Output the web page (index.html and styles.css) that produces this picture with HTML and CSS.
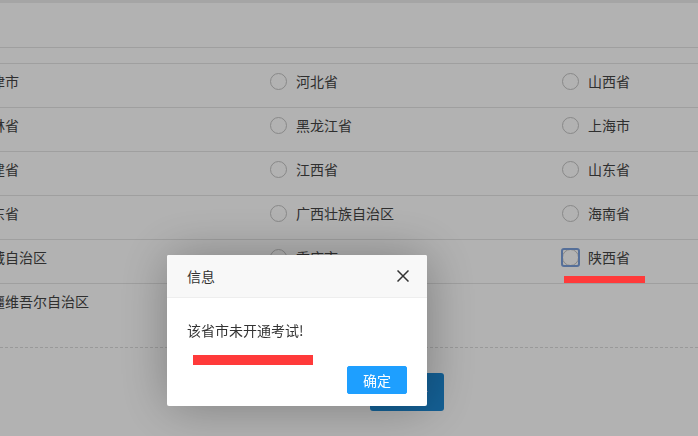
FILE: index.html
```html
<!DOCTYPE html>
<html lang="zh-CN">
<head>
    <meta charset="UTF-8">
    <meta name="viewport" content="width=device-width, initial-scale=1.0">
    <title>选择考试省市</title>
    <link rel="stylesheet" href="styles.css">
</head>
<body>
    <div class="topbar"></div>

    <section class="area">
        <div class="area-head"></div>
        <div class="area-list">
            <div class="row">
                <label class="item"><span class="radio"></span>天津市</label>
                <label class="item"><span class="radio"></span>河北省</label>
                <label class="item"><span class="radio"></span>山西省</label>
            </div>
            <div class="row">
                <label class="item"><span class="radio"></span>吉林省</label>
                <label class="item"><span class="radio"></span>黑龙江省</label>
                <label class="item"><span class="radio"></span>上海市</label>
            </div>
            <div class="row">
                <label class="item"><span class="radio"></span>福建省</label>
                <label class="item"><span class="radio"></span>江西省</label>
                <label class="item"><span class="radio"></span>山东省</label>
            </div>
            <div class="row">
                <label class="item"><span class="radio"></span>广东省</label>
                <label class="item"><span class="radio"></span>广西壮族自治区</label>
                <label class="item"><span class="radio"></span>海南省</label>
            </div>
            <div class="row">
                <label class="item"><span class="radio"></span>西藏自治区</label>
                <label class="item"><span class="radio"></span>重庆市</label>
                <label class="item"><span class="radio focused"></span>陕西省</label>
            </div>
            <div class="row">
                <label class="item"><span class="radio"></span>新疆维吾尔自治区</label>
            </div>
        </div>
        <div class="actions">
            <button class="btn-next">下一步</button>
        </div>
    </section>

    <div class="shade"></div>

    <div class="layer">
        <div class="layer-title">
            信息
            <span class="layer-close">
                <svg width="12" height="12" viewBox="0 0 12 12">
                    <path d="M0.5 0.5L11.5 11.5M11.5 0.5L0.5 11.5" stroke="#333" stroke-width="1.5" fill="none"/>
                </svg>
            </span>
        </div>
        <div class="layer-content">该省市未开通考试!</div>
        <div class="layer-btn">
            <a class="btn-ok">确定</a>
        </div>
    </div>

    <!-- annotation marks -->
    <div class="mark mark-province"></div>
    <div class="mark mark-message"></div>
</body>
</html>
```

FILE: styles.css
```css
body {
    margin: 0;
    font-family: "Microsoft YaHei", "Noto Sans CJK SC", sans-serif;
    font-size: 14px;
    color: #444;
    background-color: #fff;
    overflow: hidden;
}

.topbar {
    height: 3px;
    background-color: #ececec;
}

.area-head {
    height: 44px;
}

.area-list {
    border-top: 1px solid #e4e4e4;
    padding-top: 15px;
}

.row {
    display: grid;
    grid-template-columns: 319px 292px 1fr;
    margin-left: -49px;
    height: 44px;
    box-sizing: border-box;
    border-top: 1px solid #e4e4e4;
    padding-top: 7px;
}

.item {
    display: flex;
    align-items: center;
    gap: 9px;
    height: 20px;
    line-height: 20px;
    white-space: nowrap;
}

.radio {
    position: relative;
    width: 15px;
    height: 15px;
    border: 1px solid #c4c4c4;
    border-radius: 50%;
    background-color: #fff;
    flex-shrink: 0;
}

/* focus ring of the clicked radio */
.radio.focused::after {
    content: "";
    position: absolute;
    left: -2px;
    top: -2px;
    width: 15px;
    height: 15px;
    border: 2px solid #7a9fdc;
    border-radius: 3px;
}

.actions {
    margin-top: 20px;
    border-top: 1px dashed #dcdcdc;
    padding-top: 25px;
    padding-left: 370px;
}

.btn-next {
    width: 74px;
    height: 38px;
    border: none;
    border-radius: 3px;
    background-color: #1d8ad6;
    color: #fff;
    font-family: inherit;
    font-size: 14px;
}

.shade {
    position: fixed;
    top: 0;
    left: 0;
    right: 0;
    bottom: 0;
    background-color: rgba(0, 0, 0, 0.3);
}

.layer {
    position: fixed;
    left: 167px;
    top: 255px;
    width: 260px;
    background-color: #fff;
    border-radius: 2px;
    box-shadow: 1px 1px 50px rgba(0, 0, 0, 0.3);
    color: #333;
}

.layer-title {
    position: relative;
    height: 42px;
    line-height: 42px;
    padding: 0 80px 0 20px;
    background-color: #f8f8f8;
    border-bottom: 1px solid #eee;
    border-radius: 2px 2px 0 0;
}

.layer-close {
    position: absolute;
    right: 18px;
    top: 15px;
    width: 12px;
    height: 12px;
    line-height: 0;
}

.layer-content {
    padding: 20px;
    line-height: 24px;
}

.layer-btn {
    text-align: right;
    padding: 0 15px 12px;
    line-height: 0;
}

.btn-ok {
    display: inline-block;
    height: 26px;
    line-height: 26px;
    margin: 4px 5px 0;
    padding: 0 15px;
    border: 1px solid #1e9fff;
    border-radius: 2px;
    background-color: #1e9fff;
    color: #fff;
    cursor: pointer;
}

.mark {
    position: absolute;
    background-color: #ff3a3a;
}

.mark-province {
    left: 564px;
    top: 276px;
    width: 81px;
    height: 7px;
}

.mark-message {
    left: 193px;
    top: 355px;
    width: 120px;
    height: 10px;
}
```
